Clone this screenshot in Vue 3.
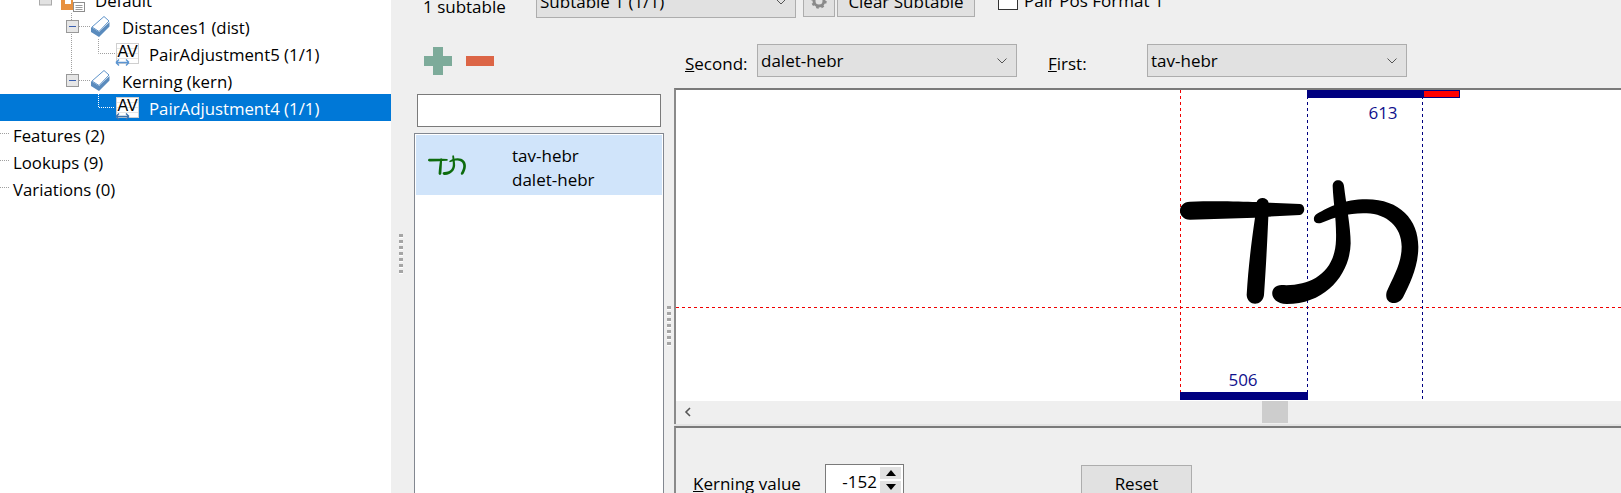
<script setup>
const glyphPaths = [
  'M150 365 C220 362 300 364 350 366 C355 350 382 350 386 368 L480 372 C497 374 497 402 480 405 L385 410 C382 480 378 560 372 645 C368 680 322 680 320 645 C325 560 335 480 345 413 L150 419 C110 418 110 366 150 365 Z',
  'M578 318 C578 295 610 295 612 318 C618 370 632 440 632 490 C630 580 560 672 440 672 C385 672 385 615 425 615 C510 620 585 580 588 480 C590 420 580 370 578 318 Z',
  'M530 402 C570 380 610 358 680 358 C780 358 835 420 835 500 C835 560 810 610 790 650 C775 680 730 675 740 635 C760 590 785 550 785 500 C785 440 740 402 680 400 C630 398 590 410 545 428 C520 436 515 412 530 402 Z'
]

const rows = [
  { label: 'Default', icon: 'folder', left: 61 },
  { label: 'Distances1 (dist)', icon: 'tag', left: 90 },
  { label: 'PairAdjustment5 (1/1)', icon: 'av', left: 115 },
  { label: 'Kerning (kern)', icon: 'tag', left: 90 },
  { label: 'PairAdjustment4 (1/1)', icon: 'av', left: 115, selected: true },
  { label: 'Features (2)', left: 13 },
  { label: 'Lookups (9)', left: 13 },
  { label: 'Variations (0)', left: 13 }
]
</script>

<template>
  <div class="window">
    <aside class="tree">
      <div
        v-for="row in rows"
        :key="row.label"
        class="row"
        :class="{ selected: row.selected }"
        :style="{ paddingLeft: row.left + 'px' }"
      >
        <svg v-if="row.icon === 'folder'" class="ico folder" width="25" height="14" viewBox="0 0 25 14">
          <path d="M0 0h4v5h6V0h2v11H0z" fill="#e8913f" />
          <rect x="12.5" y="3.5" width="11" height="9" fill="#fff" stroke="#8d8d8d" />
          <path d="M14.5 6.5h7M14.5 8.5h7M14.5 10.5h7" stroke="#9a9a9a" />
        </svg>
        <svg v-else-if="row.icon === 'tag'" class="ico tag" width="21" height="22" viewBox="0 0 21 22">
          <path d="M2 11 L14 .5 L19 5 L9 15.5 Z" fill="#fff" stroke="#5e93c9" />
          <path d="M1 11 L9 16 L19.5 6 L19.5 10.5 L9 21 L1 16 Z" fill="#5a8bbd" />
        </svg>
        <svg v-else-if="row.icon === 'av'" class="ico av" width="25" height="26" viewBox="0 0 25 26">
          <rect x="1.5" y="1.5" width="22" height="20" fill="#fff" stroke="#cfcfcf" />
          <path d="M2 6.5h21M2 11.5h21M2 16.5h21" stroke="#e6e6e6" />
          <text x="2.5" y="15" class="av-text">AV</text>
          <path d="M1 20.5h13M1 20.5l3-3M1 20.5l3 3M14 20.5l-3-3M14 20.5l-3 3" fill="none" :stroke="row.selected ? '#3f74ad' : '#5b95d2'" stroke-width="1.4" />
        </svg>
        <span class="label">{{ row.label }}</span>
      </div>

      <svg class="tree-lines" width="391" height="210" viewBox="0 0 391 210">
        <g fill="none" stroke="#a0a0a0" stroke-dasharray="1 1">
          <path d="M71.5 13V20M71.5 34V75M79 26.5H90M79 80.5H90" />
          <path d="M98.5 39V53.5H115" />
          <path d="M0 133.5H10M0 160.5H10M0 187.5H10" />
        </g>
        <path d="M98.5 94V107.5H115" fill="none" stroke="#fff" stroke-dasharray="1 1" />
        <rect x="39.5" y="-6" width="12" height="11" fill="#e2e2e2" stroke="#a9a9a9" />
        <g fill="#e6e6e6" stroke="#999">
          <rect x="66.5" y="20.5" width="12" height="12" />
          <rect x="66.5" y="74.5" width="12" height="12" />
        </g>
        <path d="M69 26.5h7M69 80.5h7" stroke="#3a5fb0" />
      </svg>
    </aside>

    <main class="editor">
      <div class="subtable-bar">
        <span class="count">1 subtable</span>
        <div class="combo subtable-combo">
          <span>Subtable 1 (1/1)</span>
          <svg class="chev" width="10" height="6" viewBox="0 0 10 6"><path d="M0.5 0.5L5 5L9.5 0.5" fill="none" stroke="#555" /></svg>
        </div>
        <button class="btn gear-btn">
          <svg width="16" height="16" viewBox="0 0 16 16">
            <circle cx="8" cy="8" r="5" fill="none" stroke="#8a8a8a" stroke-width="3" />
            <circle cx="8" cy="8" r="6.5" fill="none" stroke="#8a8a8a" stroke-width="2.4" stroke-dasharray="2.5 2.6" />
          </svg>
        </button>
        <button class="btn clear-btn">Clear Subtable</button>
        <label class="check"><span class="box"></span>Pair Pos Format 1</label>
      </div>

      <div class="panes">
        <div class="splitter outer-split"><i class="dots"></i></div>

        <section class="pairs">
          <div class="tools">
            <span class="plus"></span>
            <span class="minus"></span>
          </div>
          <input class="search" type="text" />
          <div class="pair-list">
            <div class="pair-item">
              <svg class="mini" width="38" height="20" viewBox="122 295 713 377">
                <path v-for="d in glyphPaths" :key="d" :d="d" fill="#0d6b0d" />
              </svg>
              <div class="pair-names">
                <span>tav-hebr</span>
                <span>dalet-hebr</span>
              </div>
            </div>
          </div>
        </section>

        <div class="splitter inner-split"><i class="dots"></i></div>

        <section class="detail">
          <div class="selectors">
            <span class="sel-label second-label"><u>S</u>econd:</span>
            <div class="combo glyph-combo">
              <span>dalet-hebr</span>
              <svg class="chev" width="10" height="6" viewBox="0 0 10 6"><path d="M0.5 0.5L5 5L9.5 0.5" fill="none" stroke="#555" /></svg>
            </div>
            <span class="sel-label first-label"><u>F</u>irst:</span>
            <div class="combo glyph-combo">
              <span>tav-hebr</span>
              <svg class="chev" width="10" height="6" viewBox="0 0 10 6"><path d="M0.5 0.5L5 5L9.5 0.5" fill="none" stroke="#555" /></svg>
            </div>
          </div>

          <div class="canvas">
            <svg class="drawing" width="945" height="311" viewBox="676 90 945 311">
              <g shape-rendering="crispEdges" fill="none" stroke-width="1" stroke-dasharray="3 3">
                <path d="M1180.5 90V392" stroke="#f00000" />
                <path d="M676 307.5H1621" stroke="#f00000" />
                <path d="M1307.5 90V400M1422.5 90V400" stroke="#000080" />
              </g>
              <g transform="translate(1140 80) scale(.33333)">
                <path v-for="d in glyphPaths" :key="d" :d="d" fill="#000" />
              </g>
              <rect x="1307" y="90" width="116" height="8" fill="#000080" />
              <rect x="1423.5" y="90.5" width="36" height="7" fill="#f00" stroke="#000080" />
              <rect x="1180" y="392" width="128" height="8" fill="#000080" />
              <text x="1383" y="119" class="metric">613</text>
              <text x="1243" y="386" class="metric">506</text>
            </svg>
          </div>

          <div class="hscroll">
            <svg class="left-arrow" width="8" height="10" viewBox="0 0 8 10"><path d="M6 1L2 5L6 9" fill="none" stroke="#555" stroke-width="1.6" /></svg>
            <span class="thumb"></span>
          </div>

          <div class="kerning">
            <span class="kern-label"><u>K</u>erning value</span>
            <div class="spin">
              <span class="spin-value">-152</span>
              <span class="spin-btns">
                <span class="spin-btn"><i class="tri up"></i></span>
                <span class="spin-btn"><i class="tri down"></i></span>
              </span>
            </div>
            <button class="btn reset-btn">Reset</button>
          </div>
        </section>
      </div>
    </main>
  </div>
</template>

<style scoped>
.window {
  display: flex;
  width: 1621px;
  height: 493px;
  overflow: hidden;
  background: #efefef;
  color: #000;
  font-family: "Open Sans", "Noto Sans", sans-serif;
  font-size: 17px;
}

/* tree */
.tree {
  position: relative;
  flex: 0 0 391px;
  background: #fff;
}
.row {
  position: relative;
  display: flex;
  align-items: center;
  height: 27px;
  font-size: 16.8px;
}
.row:first-child { margin-top: -14px; }
.row.selected { background: #0078d7; color: #fff; }
.label { white-space: nowrap; padding-top: 2px; }
.ico { flex: none; display: block; }
.folder { align-self: flex-end; margin-right: 9px; }
.tag { margin-right: 11px; }
.av { margin: 3px 9px 0 0; }
.av-text {
  font-family: "Liberation Sans", sans-serif;
  font-size: 16px;
  fill: #000;
}
.tree-lines { position: absolute; left: 0; top: 0; pointer-events: none; }

/* main */
.editor {
  flex: 1;
  min-width: 0;
  display: flex;
  flex-direction: column;
}
.subtable-bar {
  flex: none;
  height: 33px;
  margin-top: -15px;
  display: flex;
  align-items: flex-start;
}
.count { margin: 12px 0 0 32px; width: 113px; line-height: 20px; }
.combo {
  flex: none;
  box-sizing: border-box;
  display: flex;
  align-items: center;
  justify-content: space-between;
  border: 1px solid #adadad;
  background: #e1e1e1;
  padding: 0 9px 0 3px;
}
.subtable-combo { width: 260px; height: 33px; }
.chev { flex: none; }
.btn {
  box-sizing: border-box;
  border: 1px solid #adadad;
  background: #e1e1e1;
  color: #000;
  font: inherit;
  padding: 0;
  display: flex;
  align-items: center;
  justify-content: center;
}
.gear-btn { width: 32px; height: 32px; margin-left: 7px; }
.clear-btn { width: 138px; height: 32px; margin-left: 2px; }
.check { display: flex; align-items: center; margin: 5px 0 0 23px; height: 20px; white-space: nowrap; }
.box {
  box-sizing: border-box;
  width: 20px;
  height: 20px;
  border: 1px solid #333;
  background: #fff;
  margin-right: 6px;
}

.panes { flex: 1; min-height: 0; display: flex; }
.splitter { flex: none; position: relative; }
.outer-split { width: 23px; }
.inner-split { width: 10px; }
.dots {
  position: absolute;
  width: 4px;
  height: 41px;
  background: repeating-linear-gradient(#a5a5a5 0 3px, #fff 3px 4px, #efefef 4px 6px);
}
.outer-split .dots { left: 8px; top: 216px; }
.inner-split .dots { left: 3px; top: 288px; }

/* pairs list */
.pairs {
  flex: 0 0 250px;
  display: flex;
  flex-direction: column;
  min-height: 0;
}
.tools {
  flex: none;
  height: 76px;
  box-sizing: border-box;
  padding: 29px 0 0 10px;
  display: flex;
  gap: 14px;
}
.plus {
  width: 28px;
  height: 28px;
  background:
    linear-gradient(#7dab9a, #7dab9a) center / 10px 28px no-repeat,
    linear-gradient(#7dab9a, #7dab9a) center / 28px 10px no-repeat;
}
.minus {
  width: 28px;
  height: 10px;
  margin-top: 9px;
  background: #dc6546;
}
.search {
  flex: none;
  box-sizing: border-box;
  display: block;
  width: 244px;
  height: 33px;
  margin: 0 3px 6px;
  padding: 0;
  border: 1px solid #7a7a7a;
  background: #fff;
  outline: none;
}
.pair-list {
  flex: 1;
  margin-bottom: -20px;
  box-sizing: border-box;
  border: 1px solid #828790;
  background: #fff;
  padding: 1px;
}
.pair-item {
  height: 60px;
  display: flex;
  align-items: center;
  background: #d0e4fa;
}
.mini { margin-left: 12px; flex: none; }
.pair-names {
  margin-left: 46px;
  margin-top: 5px;
  display: flex;
  flex-direction: column;
  line-height: 24px;
}

/* detail */
.detail {
  flex: 1;
  min-width: 0;
  display: flex;
  flex-direction: column;
}
.selectors {
  flex: none;
  height: 70px;
  box-sizing: border-box;
  padding-top: 26px;
  display: flex;
  align-items: flex-start;
}
.sel-label { line-height: 22px; margin-top: 9px; }
.second-label { width: 72px; padding-left: 11px; box-sizing: border-box; margin-right: 11px; white-space: nowrap; }
.first-label { width: 130px; padding-left: 31px; box-sizing: border-box; }
.glyph-combo { width: 260px; height: 33px; }
.canvas {
  flex: none;
  box-sizing: border-box;
  height: 313px;
  border-top: 2px solid #7a7a7a;
  border-left: 2px solid #8a8a8a;
  background: #fff;
}
.drawing { display: block; }
.metric {
  font-size: 17px;
  fill: #10108c;
  text-anchor: middle;
}
.hscroll {
  flex: none;
  position: relative;
  height: 23px;
  border-left: 2px solid #8a8a8a;
  background: #efefef;
}
.left-arrow { position: absolute; left: 8px; top: 6px; }
.thumb {
  position: absolute;
  left: 586px;
  top: 0;
  width: 26px;
  height: 22px;
  background: #cdcdcd;
}
.kerning {
  flex: 1;
  border-top: 2px solid #7a7a7a;
  border-left: 2px solid #8a8a8a;
  margin-top: 2px;
  box-shadow: 0 -2px 0 #e3e3e3;
  display: flex;
  align-items: flex-start;
  padding: 36px 0 0 17px;
  min-height: 0;
}
.kern-label { width: 132px; line-height: 22px; margin-top: 9px; white-space: nowrap; }
.spin {
  flex: none;
  box-sizing: border-box;
  width: 79px;
  height: 34px;
  border: 1px solid #7a7a7a;
  background: #fff;
  display: flex;
  padding: 2px 2px 0 0;
}
.spin-value { flex: 1; text-align: right; padding: 5px 3px 0 0; line-height: 20px; }
.spin-btns { width: 21px; display: flex; flex-direction: column; gap: 2px; }
.spin-btn {
  height: 12px;
  flex: none;
  background: #e1e1e1;
  display: flex;
  align-items: center;
  justify-content: center;
}
.tri { width: 0; height: 0; border-left: 5px solid transparent; border-right: 5px solid transparent; }
.tri.up { border-bottom: 6px solid #000; }
.tri.down { border-top: 6px solid #000; }
.reset-btn { width: 111px; height: 32px; margin: 1px 0 0 177px; flex: none; padding-top: 4px; }
</style>

<style>
html, body { margin: 0; background: #efefef; overflow: hidden; }
</style>
